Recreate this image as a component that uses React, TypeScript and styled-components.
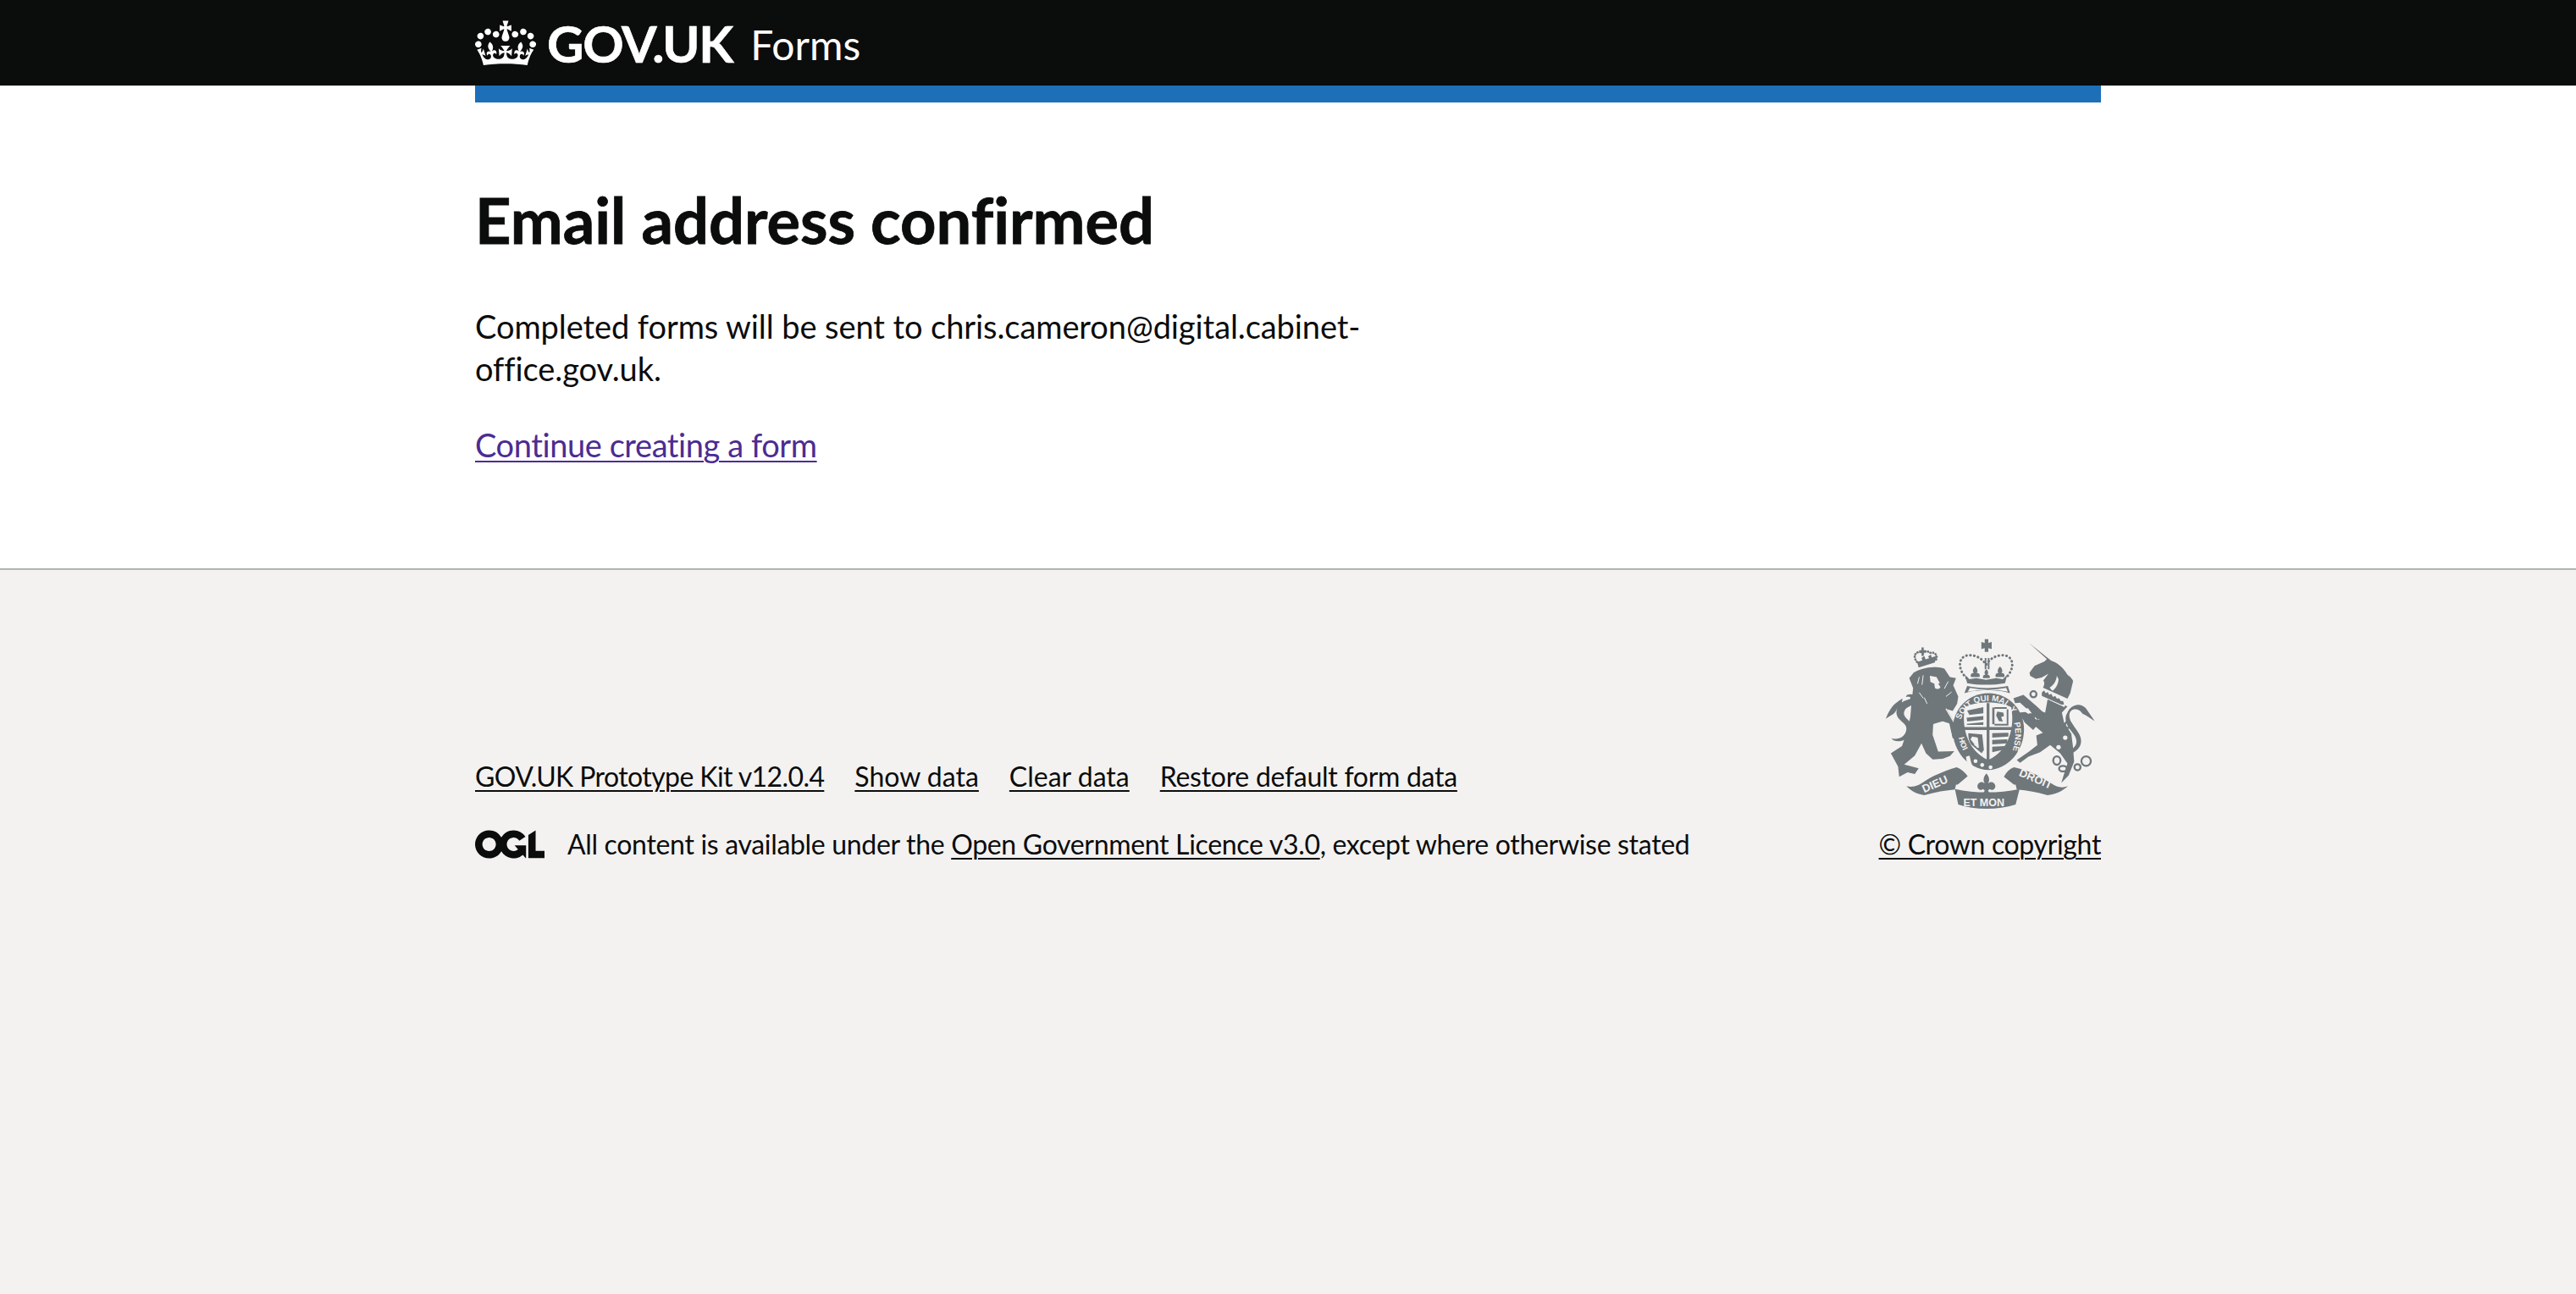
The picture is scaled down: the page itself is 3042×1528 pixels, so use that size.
import React from "react";
import styled, { createGlobalStyle } from "styled-components";

const Global = createGlobalStyle`
  html, body { margin: 0; padding: 0; background: #f3f2f1; }
  body {
    font-family: Lato, "Noto Sans", sans-serif;
    font-variant-ligatures: none;
    color: #0b0c0c;
  }
`;
const Header = styled.header`
  background: #0b0c0c;
  height: 101px;
`;
const Container = styled.div`
  width: 1920px;
  margin: 0 auto;
`;
const Logo = styled.div`
  display: flex;
  align-items: center;
  height: 101px;
  color: #fff;
`;
const Crown = styled.svg`
  width: 72px;
  height: 60px;
  margin-right: 13px;
`;
const Logotype = styled.span`
  font-size: 60px;
  font-weight: 700;
  line-height: 60px;
  letter-spacing: -1.3px;
  -webkit-text-stroke: 0.6px #fff;
`;
const Product = styled.span`
  font-size: 48px;
  line-height: 60px;
  margin-left: 21px;
  padding-top: 4px;
`;
const BlueBar = styled.div`
  height: 20px;
  background: #1d70b8;
`;
const Top = styled.div`
  background: #fff;
`;
const Main = styled.main`
  padding: 99px 0 81px;
`;
const Title = styled.h1`
  margin: 0 0 60px;
  font-size: 74px;
  line-height: 80px;
  font-weight: 700;
  -webkit-text-stroke: 0.8px #0b0c0c;
`;
const Body = styled.p`
  margin: 0 0 40px;
  width: 1240px;
  font-size: 38px;
  line-height: 50px;
`;
const BodyText = styled(Body)`
  letter-spacing: -0.08px;
`;
const VisitedLink = styled.a`
  color: #4c2c92;
  letter-spacing: -0.42px;
  text-decoration: underline;
  text-decoration-thickness: 2px;
  text-underline-offset: 4px;
`;
const Footer = styled.footer`
  border-top: 2px solid #b1b4b6;
  background: #f3f2f1;
  padding: 80px 0 0;
  height: 856px;
  box-sizing: border-box;
  font-size: 32px;
  line-height: 40px;
`;
const FooterRow = styled(Container)`
  display: flex;
  justify-content: space-between;
  align-items: flex-end;
`;
const Meta = styled.div``;
const MetaList = styled.ul`
  display: flex;
  gap: 36px;
  list-style: none;
  margin: 0 0 40px;
  padding: 0;
`;
const FooterLink = styled.a<{ $spacing?: number }>`
  color: #0b0c0c;
  letter-spacing: ${(p) => p.$spacing ?? 0}px;
  text-decoration: underline;
  text-decoration-thickness: 2px;
  text-underline-offset: 4px;
`;
const Licence = styled.div`
  display: flex;
  align-items: center;
`;
const LicenceText = styled.span`
  letter-spacing: -0.32px;
`;
const OglLogo = styled.svg`
  width: 82px;
  height: 34px;
  margin-right: 27px;
`;
const CopyrightBlock = styled.div`
  display: flex;
  flex-direction: column;
  align-items: center;
`;
const Arms = styled.svg`
  width: 250px;
  height: 204px;
  margin-bottom: 20px;
  fill: #6f777b;
`;

const crownPath =
  "M25 30.2c3.5 1.5 7.7-.2 9.1-3.7 1.5-3.6-.2-7.8-3.9-9.2-3.6-1.4-7.6.3-9.1 3.9-1.4 3.5.3 7.5 3.9 9zM9 39.5c3.6 1.5 7.8-.2 9.2-3.7 1.5-3.6-.2-7.8-3.9-9.1-3.6-1.5-7.6.2-9.1 3.8-1.4 3.5.3 7.5 3.8 9zM4.4 57.2c3.5 1.5 7.7-.2 9.1-3.8 1.5-3.6-.2-7.7-3.9-9.1-3.5-1.5-7.6.3-9.1 3.8-1.4 3.5.3 7.6 3.9 9.1zm38.3-21.4c3.5 1.5 7.7-.2 9.1-3.8 1.5-3.6-.2-7.7-3.9-9.1-3.6-1.5-7.6.3-9.1 3.8-1.3 3.6.4 7.7 3.9 9.1zm64.4-5.6c-3.6 1.5-7.8-.2-9.1-3.7-1.5-3.6.2-7.8 3.8-9.2 3.6-1.4 7.7.3 9.2 3.9 1.3 3.5-.4 7.5-3.9 9zm15.9 9.3c-3.6 1.5-7.7-.2-9.1-3.7-1.5-3.6.2-7.8 3.7-9.1 3.6-1.5 7.7.2 9.2 3.8 1.5 3.5-.3 7.5-3.8 9zm4.7 17.7c-3.6 1.5-7.8-.2-9.2-3.8-1.5-3.6.2-7.7 3.9-9.1 3.6-1.5 7.7.3 9.2 3.8 1.3 3.5-.4 7.6-3.9 9.1zM89.3 35.8c-3.6 1.5-7.8-.2-9.2-3.8-1.4-3.6.2-7.7 3.9-9.1 3.6-1.5 7.7.3 9.2 3.8 1.4 3.6-.3 7.7-3.9 9.1zM69.7 17.7l8.9 4.7V9.3l-8.9 2.8c-.2-.3-.5-.6-.9-.9L72.4 0H59.6l3.5 11.2c-.3.3-.6.5-.9.9l-8.8-2.8v13.1l8.8-4.7c.3.3.6.7.9.9l-5 15.4v.1c-.2.8-.4 1.6-.4 2.4 0 4.1 3.1 7.5 7 8.1h.2c.3 0 .7.1 1 .1.4 0 .7 0 1-.1h.2c4-.6 7.1-4.1 7.1-8.1 0-.8-.1-1.7-.4-2.4V34l-5.1-15.4c.4-.2.7-.6 1-.9zM66 92.8c16.9 0 32.8 1.1 47.1 3.2 4-16.9 8.9-26.7 14-33.5l-9.6-3.4c1 4.9 1.1 7.2 0 10.2-1.5-1.4-3-4.3-4.2-8.7L108.6 76c2.8-2 5-3.2 7.5-3.3-4.4 9.4-10 11.9-13.6 11.2-4.3-.8-6.3-4.6-5.6-7.9 1-4.7 5.7-5.9 8-.5 4.3-8.7-3-11.4-7.6-8.8 7.1-7.2 7.9-13.5 2.1-21.1-8 6.1-8.1 12.3-4.5 20.8-4.7-5.4-12.1-2.5-9.5 6.2 3.4-5.2 7.9-2 7.2 3.1-.6 4.3-6.4 7.8-13.5 7.2-10.3-.9-10.9-8-11.2-13.8 2.5-.5 7.1 1.8 11 7.3L80.2 60c-4.1 4.4-8 5.3-12.3 5.4 1.4-4.4 8-11.6 8-11.6H55.5s6.4 7.2 7.9 11.6c-4.2-.1-8-1-12.3-5.4l1.4 16.4c3.9-5.5 8.5-7.7 10.9-7.3-.3 5.8-.9 12.8-11.1 13.8-7.2.6-12.9-2.9-13.5-7.2-.7-5 3.8-8.3 7.1-3.1 2.7-8.7-4.6-11.6-9.4-6.2 3.7-8.5 3.6-14.7-4.6-20.8-5.8 7.6-5 13.9 2.2 21.1-4.7-2.6-11.9.1-7.7 8.8 2.3-5.5 7.1-4.2 8.1.5.7 3.3-1.3 7.1-5.7 7.9-3.5.7-9-1.8-13.5-11.2 2.5.1 4.7 1.3 7.5 3.3l-4.7-15.4c-1.2 4.4-2.7 7.2-4.3 8.7-1.1-3-.9-5.3 0-10.2l-9.5 3.4c5 6.9 9.9 16.7 14 33.5 14.8-2.1 30.8-3.2 47.7-3.2z";
const oglPath =
  "M421.5 142.8V.1l-50.7 32.3v161.1h112.4v-50.7zm-122.3-9.6A47.12 47.12 0 0 1 221 97.8c0-26 21.1-47.1 47.1-47.1 16.7 0 31.4 8.7 39.7 21.8l42.7-27.2A97.63 97.63 0 0 0 268.1 0c-36.5 0-68.3 20.1-85.1 49.7A98 98 0 0 0 97.8 0C43.9 0 0 43.9 0 97.8s43.9 97.8 97.8 97.8c36.5 0 68.3-20.1 85.1-49.7a97.76 97.76 0 0 0 149.6 25.4l19.4 22.2h3v-87.8h-80l24.3 27.5zM97.8 145c-26 0-47.1-21.1-47.1-47.1s21.1-47.1 47.1-47.1 47.2 21 47.2 47S123.8 145 97.8 145";

const BG = "#f3f2f1";
const INK = "#6f777b";

function RoyalArms() {
  return (
    <Arms viewBox="70 35 760 620" role="img" aria-label="Royal coat of arms">
      {/* lion tail */}
      <path d="M172 372C150 412 108 414 96 396c18 6 52 0 54-34 2-26-46-30-34-72 8-24 30-30 44-34 10-6 2-12-12-8l4-8c22-8 38 4 32 24-8 18-36 16-42 36-8 26 36 34 36 68z" />
      <path d="M76 326c8-22 22-48 44-62 6-4 10-8 16-10l-4 22c-14 6-16 18-24 28-8 10-20 12-32 22z" />
      {/* lion body */}
      <path d="M176 160c24-14 70-28 110-14l20 30 22 4-10 26 18 40-4 26-16 26-20-6 46 80-2 28-24-4-14-50-26-8-30 10-2 36 20 60 58-2-16 18-26 10-36 2-24-22-16-36-24 44-38 32 52 14-14 20-26-6-30 16-4-36-26-48 40-26 16-46 14-58 4-50 6-54-14-36z" />
      {/* lion belly gap and mane lines */}
      <path d="M246 345l34-10 24 8 10 46-28 6-20-10z" fill={BG} />
      <path d="M292 290l50 84" fill="none" stroke={BG} strokeWidth="4" />
      <path d="M196 176l-6 24M210 170l-4 34M300 192l-14 26M312 230l-20 16M196 232l14 20M214 250l10 22" fill="none" stroke={BG} strokeWidth="3" />
      {/* lion face */}
      <path d="M234 172l24 4 12 22-6 2 8 12c-2 8-16 10-20 2l-2-14-14-6z" fill={BG} />
      {/* lion crown */}
      <path d="M188 122l70-22-6 24-58 18z" />
      <g fill="none" stroke={INK} strokeWidth="8" strokeDasharray="1 9" strokeLinecap="round">
        <path d="M188 122c-20-24 0-44 22-32 6-8 18-8 24 0 18-6 32 10 20 28" />
      </g>
      <path d="M204 70h8v10h8v8h-8v12h-8V88h-8v-8h8z" />
      <path d="M214 100l6 16-10 6-6-14zM238 96l4 14-8 4-6-12z" />
      {/* royal crown */}
      <path d="M431 40h13v14l12-4v26l-12-4v14h-13V72l-12 4V50l12 4z" />
      <path d="M431 108h6v40h-6zM442 108h6v40h-6z" />
      <g fill="none" stroke={INK} strokeWidth="9" strokeDasharray="1 13" strokeLinecap="round">
        <path d="M366 180c-36-34-30-82 10-82 26 0 46 12 60 34 14-22 34-34 60-34 40 0 46 48 10 82" />
      </g>
      <path d="M397 138c10 10 10 18 5 24 8-2 14 6 10 14h-30c-4-8 2-16 10-14-5-6-5-14 5-24zM486 138c10 10 10 18 5 24 8-2 14 6 10 14h-30c-4-8 2-16 10-14-5-6-5-14 5-24z" />
      <path d="M437 148c8 8 8 14 4 20 6 0 10 4 8 12h-24c-2-8 2-12 8-12-4-6-4-12 4-20z" />
      <path d="M360 168l16 16 24-4 36 6 36-6 24 4 16-16-8 30c-40 8-100 8-136 0z" />
      <path d="M368 208c40 10 100 10 146 0l8 26c-44-14-120-14-164 0zm10 7l-8 14c40-10 108-10 144 0l-6-14c-40 8-90 8-130 0z" fillRule="evenodd" />
      {/* garter */}
      <path d="M444 234c74 0 128 60 128 130 0 78-58 144-128 146-72-2-128-68-128-146 0-70 54-130 128-130z" />
      {/* shield */}
      <path d="M360 284c46-22 120-22 166 0 12 60 0 152-83 190-82-38-95-130-83-190z" fill={BG} />
      <path d="M438 270h10v210h-10zM354 356h178v10H354z" />
      {/* first quarter: three lions */}
      <path d="M368 296l58-12v22l-50 6zM366 322l60-6v14l-58 6zM366 344l60-6v10h-58z" />
      {/* second quarter: lion rampant */}
      <path d="M458 286h8v60h-8zM516 292v58h-6v-58zM466 284h44v6h-44zM466 344h44v6h-44zM476 300l22 4 2 12-10 4 6 16-14-2-10-20z" />
      {/* third quarter: harp */}
      <path d="M372 378l50 4 6 56-8 12-38-32c-8-12-10-24-10-40z" />
      <path d="M386 390l20 4 4 36-6 0-24-30zM394 398l6 26-6-2-4-22z" fill={BG} />
      {/* fourth quarter: three lions */}
      <path d="M458 378l58-2v14l-58 4zM458 402l54-2v14l-54 4zM458 426l44-2v12l-44 10z" />
      {/* garter buckle dots */}
      <circle cx="398" cy="478" r="7" fill={BG} />
      <circle cx="422" cy="492" r="7" fill={BG} />
      <circle cx="452" cy="500" r="7" fill={BG} />
      <path d="M376 458c4 8 4 26 12 36l-10 2c-10-8-14-22-14-34z" fill={BG} />
      {/* motto */}
      <g fill={BG} fontFamily="'Liberation Sans', sans-serif" fontWeight="700" fontSize="30">
        <path id="armsMottoA" d="M345 330C362 282 398 262 444 262s76 18 96 62" fill="none" />
        <text><textPath href="#armsMottoA">SOIT QUI MAL Y</textPath></text>
        <path id="armsMottoB" d="M536 340c12 50 0 100-20 136" fill="none" />
        <text><textPath href="#armsMottoB">PENSE</textPath></text>
        <path id="armsMottoC" d="M338 394c2 20 14 46 26 64" fill="none" />
        <text fontSize="28"><textPath href="#armsMottoC">HOI</textPath></text>
      </g>
      {/* unicorn tail */}
      <path d="M728 304c12-28 44-38 66-16l32 46c-14-8-30-20-44-26-6-10-16-18-28-16-26 4-22 34-8 52 16 26 40 48 28 78-8 18-26 28-44 32l-2-12c14-4 30-14 32-30 4-26-24-40-36-70-4-14-4-26 4-38z" />
      {/* unicorn body */}
      <path d="M640 240l88 42-20 22 8 36 26 40 6 48 4 52-20 50-26 26 8-26 14-44-26-36-36-30-36 26-42 16-30 22-12-10 44-30 30-24-4-34 24-10-48-40-14-14 50 8-20-20 22-12 18 6 10-54z" />
      {/* unicorn raised legs */}
      <path d="M534 252l36-12 46 40 26 24-20 26-32-32-32-30-18 2z" />
      <path d="M553 304l38-4 34 42-20 24-30-26z" />
      <path d="M562 292l24-4 14 18-10 4z" fill={BG} />
      {/* unicorn head and horn */}
      <path d="M590 54l80 64c22 6 44 26 58 50 14 10 20 18 20 24l-10 42-10 20-88-40c8-14 6-24-6-34l-18 4-22-12-2-12 18-24 36-16 8-8z" />
      <path d="M610 184l26-6 24-14-18 24-30 2z" fill={BG} />
      <path d="M664 214c14-8 24-22 26-42l6 12c0 16-10 34-22 42z" fill={BG} />
      {/* collar */}
      <path d="M633 222l92 42-8 20-92-42z" fill={BG} />
      <path d="M636 232l8-8 6 10 8-4 4 10 8-4 6 12 8-4 6 10 8-2 6 10 8 0 4 12-8 2-72-32z" />
      {/* chain */}
      <g fill="none" stroke={INK} strokeWidth="7">
        <circle cx="606" cy="238" r="11" />
        <circle cx="596" cy="322" r="12" />
        <circle cx="730" cy="348" r="11" />
        <ellipse cx="690" cy="476" rx="13" ry="15" />
        <ellipse cx="712" cy="505" rx="14" ry="10" />
        <circle cx="764" cy="500" r="11" />
        <circle cx="795" cy="478" r="17" />
      </g>
      <circle cx="696" cy="428" r="8" fill={BG} />
      <circle cx="720" cy="394" r="8" fill={BG} />
      {/* fleur-de-lis */}
      <path d="M437 522c12 14 12 26 6 36 10-10 24-4 26 8 2 12-12 20-20 12l-6 6 6 12h-24l6-12-6-6c-8 8-22 0-20-12 2-12 16-18 26-8-6-10-6-22 6-36z" />
      {/* ribbons */}
      <path d="M150 568c20 4 36 2 60-14 36-24 74-40 120-54 16 6 30 18 40 32l-36 30-6 0-4 18c-40 4-72 10-110 20-28-2-48-16-64-32z" />
      <path d="M730 568c-22 8-40 4-60-10-38-26-84-48-134-58-16 6-28 18-36 34l36 28 6 0 4 18c40 4 72 10 110 20 28 0 56-16 74-32z" />
      <path d="M324 578c74 16 156 16 232 0l-14 56c-64 20-146 20-206 0z" />
      <g fill={BG} fontFamily="'Liberation Sans', sans-serif" fontWeight="700" fontSize="40">
        <text transform="translate(214 592) rotate(-24)">DIEU</text>
        <text x="354" y="640" fontSize="38">ET MON</text>
        <text transform="translate(552 530) rotate(23)">DROIT</text>
      </g>
    </Arms>
  );
}

export default function App() {
  return (
    <>
      <Global />
      <Top>
        <Header>
          <Container>
            <Logo>
              <Crown viewBox="0 0 132 97" fill="currentColor" aria-hidden="true">
                <path fillRule="evenodd" d={crownPath} />
              </Crown>
              <Logotype>GOV.UK</Logotype>
              <Product>Forms</Product>
            </Logo>
          </Container>
        </Header>
        <Container>
          <BlueBar />
          <Main>
            <Title>Email address confirmed</Title>
            <BodyText>Completed forms will be sent to chris.cameron@digital.cabinet-office.gov.uk.</BodyText>
            <Body as="div">
              <VisitedLink href="#">Continue creating a form</VisitedLink>
            </Body>
          </Main>
        </Container>
      </Top>
      <Footer>
        <FooterRow>
          <Meta>
            <MetaList>
              <li><FooterLink href="#" $spacing={-0.6}>GOV.UK Prototype Kit v12.0.4</FooterLink></li>
              <li><FooterLink href="#">Show data</FooterLink></li>
              <li><FooterLink href="#">Clear data</FooterLink></li>
              <li><FooterLink href="#" $spacing={-0.28}>Restore default form data</FooterLink></li>
            </MetaList>
            <Licence>
              <OglLogo viewBox="0 0 483.2 195.7" fill="currentColor" aria-hidden="true">
                <path d={oglPath} />
              </OglLogo>
              <LicenceText>
                All content is available under the <FooterLink href="#" $spacing={-0.32}>Open Government Licence v3.0</FooterLink>, except where otherwise stated
              </LicenceText>
            </Licence>
          </Meta>
          <CopyrightBlock>
            <RoyalArms />
            <FooterLink href="#" $spacing={-0.35}>© Crown copyright</FooterLink>
          </CopyrightBlock>
        </FooterRow>
      </Footer>
    </>
  );
}
